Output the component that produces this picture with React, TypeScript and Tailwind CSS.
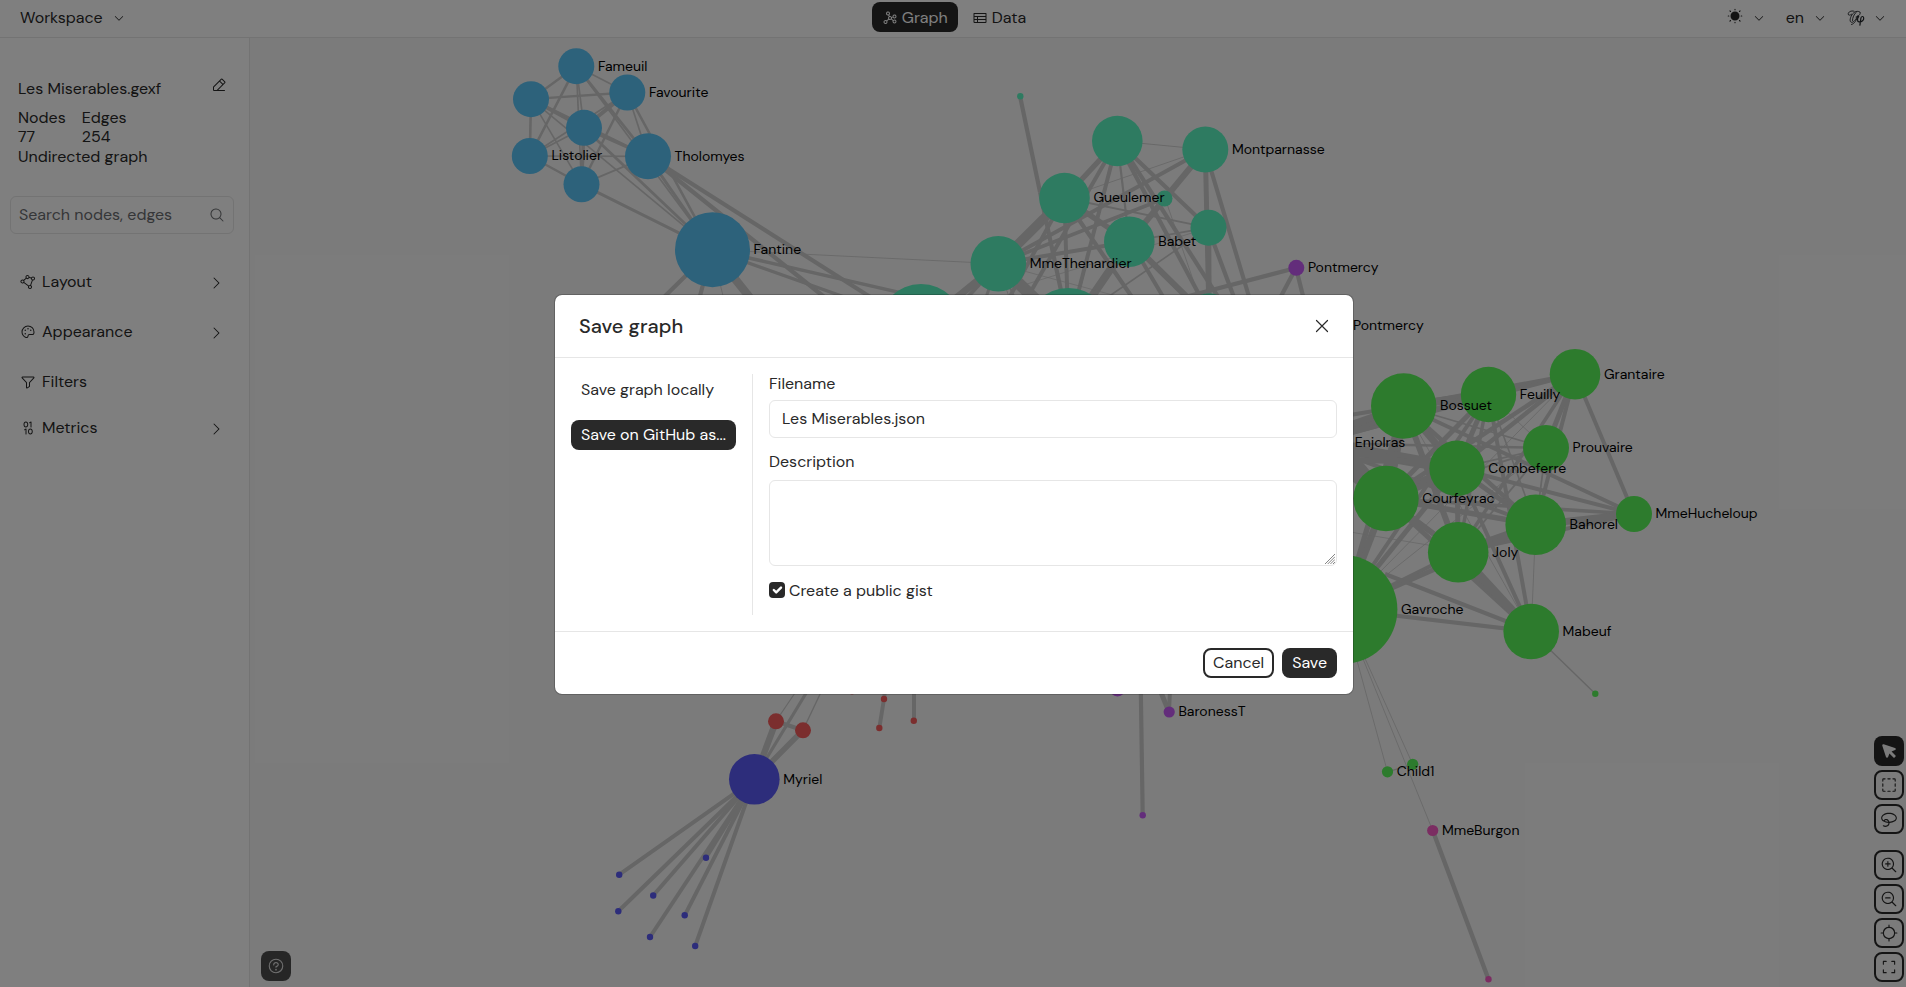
import React from "react";
import {
  PiBinary,
  PiCaretDown,
  PiCaretRight,
  PiCornersOut,
  PiCursorFill,
  PiFunnel,
  PiGps,
  PiGraph,
  PiLasso,
  PiMagnifyingGlass,
  PiMagnifyingGlassMinus,
  PiMagnifyingGlassPlus,
  PiPalette,
  PiPencilSimpleLine,
  PiPolygon,
  PiQuestion,
  PiSelection,
  PiSunDimFill,
  PiTable,
} from "react-icons/pi";

const BLUE = "#5ac4f6";
const TEAL = "#5cf6c2";
const GREEN = "#5af65a";
const PURPLE = "#c65af6";
const RED = "#f65c5c";
const INDIGO = "#5a5af6";
const PINK = "#f65ac4";

type Node = { x: number; y: number; r: number; c: string; label?: string };

const NODES: Record<string, Node> = {
  fameuil: { x: 576.3, y: 66.2, r: 18, c: BLUE, label: "Fameuil" },
  favourite: { x: 627.3, y: 92.5, r: 18, c: BLUE, label: "Favourite" },
  blach: { x: 531, y: 99.2, r: 18, c: BLUE },
  dahlia: { x: 584, y: 127.8, r: 18, c: BLUE },
  listolier: { x: 529.8, y: 156, r: 18, c: BLUE, label: "Listolier" },
  zephine: { x: 581.5, y: 184.3, r: 18, c: BLUE },
  tholomyes: { x: 648, y: 156.3, r: 23, c: BLUE, label: "Tholomyes" },
  fantine: { x: 712.5, y: 249.7, r: 37.5, c: BLUE, label: "Fantine" },

  anzelma: { x: 1020.3, y: 96.3, r: 3.2, c: TEAL },
  claquesous: { x: 1117.3, y: 141, r: 25.3, c: TEAL },
  montparnasse: { x: 1205.3, y: 149.5, r: 23, c: TEAL, label: "Montparnasse" },
  gueulemer: { x: 1064.5, y: 198, r: 25.3, c: TEAL, label: "Gueulemer" },
  boulatruelle: { x: 1164.5, y: 198.5, r: 8, c: TEAL },
  babet: { x: 1129.3, y: 241.7, r: 25.3, c: TEAL, label: "Babet" },
  brujon: { x: 1208.5, y: 227.7, r: 18, c: TEAL },
  mmeThenardier: { x: 998.3, y: 263.7, r: 27.8, c: TEAL, label: "MmeThenardier" },
  javert: { x: 921, y: 326.5, r: 42.6, c: TEAL },
  thenardier: { x: 1068.3, y: 331, r: 43, c: TEAL },
  eponine: { x: 1209, y: 316, r: 22.8, c: TEAL },

  pontmercy: { x: 1296.3, y: 267.8, r: 8, c: PURPLE, label: "Pontmercy" },
  baroness: { x: 1169.2, y: 712, r: 5.6, c: PURPLE, label: "BaronessT" },
  magnon: { x: 1117.5, y: 688.3, r: 8.2, c: PURPLE },
  vaubois: { x: 1142.7, y: 815.2, r: 3.2, c: PURPLE },

  bossuet: { x: 1403.7, y: 406, r: 32.7, c: GREEN, label: "Bossuet" },
  feuilly: { x: 1488.5, y: 394.5, r: 27.7, c: GREEN, label: "Feuilly" },
  grantaire: { x: 1575, y: 374.2, r: 25.3, c: GREEN, label: "Grantaire" },
  prouvaire: { x: 1546, y: 448, r: 23, c: GREEN, label: "Prouvaire" },
  combeferre: { x: 1457, y: 468.3, r: 27.7, c: GREEN, label: "Combeferre" },
  courfeyrac: { x: 1386, y: 498.5, r: 32.7, c: GREEN, label: "Courfeyrac" },
  joly: { x: 1458.2, y: 552.3, r: 30.3, c: GREEN, label: "Joly" },
  bahorel: { x: 1535.7, y: 524.7, r: 30.3, c: GREEN, label: "Bahorel" },
  mmeHucheloup: { x: 1634, y: 514, r: 18, c: GREEN, label: "MmeHucheloup" },
  mabeuf: { x: 1531.2, y: 631.5, r: 27.8, c: GREEN, label: "Mabeuf" },
  mother: { x: 1595.3, y: 693.8, r: 3.2, c: GREEN },
  gavroche: { x: 1343, y: 609.5, r: 54.4, c: GREEN, label: "Gavroche" },
  enjolras: { x: 1314.2, y: 443, r: 37, c: GREEN, label: "Enjolras" },
  child1: { x: 1387.5, y: 771.8, r: 5.6, c: GREEN, label: "Child1" },
  child2: { x: 1412.7, y: 764.3, r: 5.6, c: GREEN },

  burgon: { x: 1432.7, y: 830.5, r: 5.6, c: PINK, label: "MmeBurgon" },
  jondrette: { x: 1488.5, y: 979.3, r: 3.2, c: PINK },

  baptistine: { x: 776, y: 721.3, r: 8, c: RED },
  magloire: { x: 803, y: 730.3, r: 8, c: RED },
  labarre: { x: 884, y: 699, r: 3.2, c: RED },
  isabeau: { x: 879.3, y: 728, r: 3.2, c: RED },
  gervais: { x: 913.8, y: 720.7, r: 3.2, c: RED },
  scaufflaire: { x: 852, y: 691.3, r: 3.2, c: RED },

  myriel: { x: 754.3, y: 779.3, r: 25.3, c: INDIGO, label: "Myriel" },
  napoleon: { x: 619.2, y: 874.7, r: 3.2, c: INDIGO },
  cravatte: { x: 618.3, y: 911.3, r: 3.2, c: INDIGO },
  count: { x: 653.2, y: 895.5, r: 3.2, c: INDIGO },
  oldMan: { x: 650, y: 937, r: 3.2, c: INDIGO },
  geborand: { x: 706, y: 857.8, r: 3.2, c: INDIGO },
  champtercier: { x: 684.7, y: 915.3, r: 3.2, c: INDIGO },
  countess: { x: 695.2, y: 946, r: 3.2, c: INDIGO },
};

const LINKS: [string, string, number][] = [
  ["fameuil", "blach", 2.4],
  ["fameuil", "favourite", 1.7],
  ["fameuil", "dahlia", 1.7],
  ["fameuil", "zephine", 1.7],
  ["fameuil", "listolier", 2.6],
  ["fameuil", "tholomyes", 2.8],
  ["fameuil", "fantine", 1.7],
  ["blach", "favourite", 2.3],
  ["blach", "dahlia", 3.6],
  ["blach", "listolier", 2.6],
  ["blach", "zephine", 1.6],
  ["blach", "tholomyes", 2.6],
  ["blach", "fantine", 1.6],
  ["favourite", "dahlia", 4],
  ["favourite", "listolier", 1.7],
  ["favourite", "zephine", 2.5],
  ["favourite", "tholomyes", 1.7],
  ["favourite", "fantine", 2.6],
  ["dahlia", "listolier", 1.7],
  ["dahlia", "zephine", 3.5],
  ["dahlia", "tholomyes", 3.4],
  ["dahlia", "fantine", 2.8],
  ["listolier", "zephine", 2.4],
  ["listolier", "tholomyes", 1.7],
  ["zephine", "tholomyes", 1.8],
  ["zephine", "fantine", 3],
  ["tholomyes", "fantine", 3],
  ["fantine", "mmeThenardier", 0.8],
  ["fantine", "thenardier", 3.6],

  ["claquesous", "montparnasse", 0.9],
  ["claquesous", "gueulemer", 5.4],
  ["claquesous", "thenardier", 4],
  ["claquesous", "brujon", 4.2],
  ["claquesous", "babet", 2.2],
  ["montparnasse", "gueulemer", 0.8],
  ["montparnasse", "babet", 6],
  ["montparnasse", "mmeThenardier", 4],
  ["montparnasse", "eponine", 5],
  ["gueulemer", "mmeThenardier", 9.5],
  ["gueulemer", "babet", 5.5],
  ["gueulemer", "brujon", 1.8],
  ["gueulemer", "thenardier", 4],
  ["boulatruelle", "mmeThenardier", 3.6],
  ["babet", "brujon", 1.8],
  ["babet", "mmeThenardier", 4],
  ["babet", "thenardier", 8],
  ["brujon", "eponine", 5.4],
  ["mmeThenardier", "javert", 7],
  ["mmeThenardier", "thenardier", 12],

  ["bossuet", "feuilly", 8],
  ["bossuet", "grantaire", 4],
  ["bossuet", "prouvaire", 1.8],
  ["bossuet", "combeferre", 7],
  ["bossuet", "courfeyrac", 11],
  ["bossuet", "joly", 6],
  ["bossuet", "bahorel", 4.5],
  ["bossuet", "mmeHucheloup", 4],
  ["bossuet", "mabeuf", 0.8],
  ["bossuet", "enjolras", 8],
  ["feuilly", "grantaire", 4],
  ["feuilly", "prouvaire", 0.8],
  ["feuilly", "combeferre", 5],
  ["feuilly", "courfeyrac", 5],
  ["feuilly", "joly", 3.5],
  ["feuilly", "bahorel", 1.6],
  ["feuilly", "mabeuf", 4],
  ["feuilly", "enjolras", 5],
  ["grantaire", "prouvaire", 5],
  ["grantaire", "combeferre", 4.5],
  ["grantaire", "courfeyrac", 4.5],
  ["grantaire", "joly", 3.6],
  ["grantaire", "bahorel", 4],
  ["grantaire", "mmeHucheloup", 4],
  ["grantaire", "enjolras", 3.6],
  ["grantaire", "gavroche", 0.8],
  ["prouvaire", "combeferre", 1.8],
  ["prouvaire", "courfeyrac", 2],
  ["prouvaire", "joly", 1.8],
  ["prouvaire", "bahorel", 1.8],
  ["prouvaire", "enjolras", 2.6],
  ["prouvaire", "gavroche", 0.8],
  ["combeferre", "courfeyrac", 11],
  ["combeferre", "joly", 5],
  ["combeferre", "bahorel", 5],
  ["combeferre", "mmeHucheloup", 4],
  ["combeferre", "mabeuf", 4],
  ["combeferre", "gavroche", 5],
  ["combeferre", "enjolras", 12],
  ["courfeyrac", "joly", 5.5],
  ["courfeyrac", "bahorel", 5.5],
  ["courfeyrac", "mmeHucheloup", 3.6],
  ["courfeyrac", "mabeuf", 5],
  ["courfeyrac", "gavroche", 7],
  ["courfeyrac", "enjolras", 14],
  ["joly", "bahorel", 8],
  ["joly", "mmeHucheloup", 4],
  ["joly", "mabeuf", 9],
  ["joly", "gavroche", 4],
  ["joly", "enjolras", 5],
  ["bahorel", "mmeHucheloup", 7],
  ["bahorel", "mabeuf", 0.8],
  ["bahorel", "gavroche", 5],
  ["bahorel", "enjolras", 4],
  ["mabeuf", "mother", 1.4],
  ["mabeuf", "gavroche", 4.2],
  ["bossuet", "gavroche", 5.5],
  ["feuilly", "gavroche", 4],
  ["gavroche", "child1", 0.8],
  ["gavroche", "child2", 0.8],
  ["gavroche", "burgon", 0.8],
  ["child1", "child2", 1.4],
  ["burgon", "jondrette", 4.4],

  ["baptistine", "magloire", 4.2],
  ["baptistine", "myriel", 6.4],
  ["magloire", "myriel", 5.6],
  ["labarre", "isabeau", 4],
  ["napoleon", "myriel", 4],
  ["cravatte", "myriel", 4],
  ["count", "myriel", 4],
  ["oldMan", "myriel", 4],
  ["geborand", "myriel", 4],
  ["champtercier", "myriel", 4],
  ["countess", "myriel", 4],
];

// Links whose far end lies underneath the dialog.
const SEGMENTS: [number, number, number, number, number][] = [
  [648, 156, 875, 300, 4.2],
  [648, 156, 828, 300, 4.2],
  [712, 250, 850, 299, 3.4],
  [712, 250, 661, 300, 4.2],
  [712, 250, 699, 300, 4.2],
  [712, 250, 724, 300, 0.8],
  [712, 250, 755, 304, 8.4],

  [1020, 96, 1040, 192, 4.2],
  [1040, 192, 1063, 300, 4.2],
  [1117, 141, 1202, 300, 4.2],
  [1123, 148, 1220, 300, 4.2],
  [1117, 141, 1026, 300, 4],
  [1117, 141, 1077, 300, 1.8],
  [1165, 198, 1200, 300, 0.8],
  [1205, 150, 1250, 300, 4.2],
  [1208, 228, 1235, 300, 4.2],
  [1208, 228, 1108, 297, 1.6],
  [1208, 228, 1027, 284, 0.7],
  [1130, 241, 1190, 300, 6],
  [1130, 241, 1165, 300, 4],
  [1064, 198, 1134, 300, 4.2],
  [1064, 198, 1008, 300, 4],
  [998, 264, 1120, 297, 0.7],
  [998, 264, 985, 300, 3],
  [998, 264, 1010, 300, 0.8],
  [998, 264, 1016, 300, 1.8],
  [998, 264, 965, 300, 4],
  [1296, 268, 1185, 297, 4.2],
  [1296, 268, 1279, 300, 4.2],
  [1296, 268, 1304, 300, 4.2],

  [1350, 415, 1404, 406, 4],
  [1350, 425, 1404, 406, 7],
  [1350, 433, 1404, 410, 4],
  [1350, 460, 1457, 462, 6],
  [1350, 455, 1386, 498, 10],
  [1350, 532, 1458, 550, 0.7],
  [1385, 574, 1531, 631, 4.2],

  [754, 779, 808, 690, 3.2],
  [776, 721, 797, 690, 1.2],
  [803, 730, 822, 690, 1.4],
  [884, 699, 885, 690, 4],
  [914, 721, 914, 690, 4],
  [1142.7, 815, 1140.8, 690, 4.2],
  [1169, 712, 1160, 690, 5],
  [1169, 712, 1170, 690, 4],
];

function GraphCanvas() {
  return (
    <svg className="block h-full w-full" viewBox="250 38 1656 949" fontFamily="'DM Sans', sans-serif" fontSize={14}>
      <g stroke="#ccc">
        {LINKS.map(([a, b, w]) => (
          <line key={a + b} x1={NODES[a].x} y1={NODES[a].y} x2={NODES[b].x} y2={NODES[b].y} strokeWidth={w} />
        ))}
        {SEGMENTS.map(([x1, y1, x2, y2, w], i) => (
          <line key={i} x1={x1} y1={y1} x2={x2} y2={y2} strokeWidth={w} />
        ))}
      </g>
      {Object.entries(NODES).map(([id, n]) => (
        <circle key={id} cx={n.x} cy={n.y} r={n.r} fill={n.c} />
      ))}
      {Object.entries(NODES).map(([id, n]) =>
        n.label ? (
          <text key={id} x={n.x + n.r + 3.6} y={n.y + 4.4} fill="#000">
            {n.label}
          </text>
        ) : null,
      )}
      <text x={1353} y={330}>Pontmercy</text>
    </svg>
  );
}

function GephiMark() {
  return (
    <svg className="h-4 w-4.5" viewBox="0 0 18 16" fill="none" stroke="#212529" strokeWidth="0.9" strokeLinecap="round">
      <path d="M7 1.200C4 .3 1.200 2 1.200 4c0 1.500 1.800 1.500 3.300.3M13 2.200C11 .2 7 1.500 4.800 5 2.800 8.500 2.500 12 4.500 12.300c2.200.3 5-3.300 6-6.300M13 2.200c1.200 1.200-1 4.300-4 4.800M10.800 6C9.500 10 7.500 14 4.500 14.500" />
      <path d="M11.700 6.500c-1.500 1.500-1.800 5.300.3 5.300 3 .3 5-1.800 4.700-3.800-.3-2.200-2.500-1.800-2.800.2l-1 7" strokeWidth="1.200" />
      <path d="M9 2.500c-2 2-3.500 5-3.500 8" />
    </svg>
  );
}

function Header() {
  return (
    <header className="grid h-[38px] shrink-0 grid-cols-3 items-start border-b border-[#e6e6e6] bg-white pt-0.5">
      <div className="flex h-[30px] items-center pt-0.5 pl-5">
        <span>Workspace</span>
        <PiCaretDown className="ml-[10px] size-3" />
      </div>
      <div className="flex justify-center pl-0.5">
        <div className="flex h-[30px] items-center rounded-lg bg-[#292929] px-[10px] pt-0.5 text-white">
          <PiGraph className="mr-1 size-4" />
          <span>Graph</span>
        </div>
        <div className="ml-1 flex h-[30px] items-center px-[10px] pt-0.5">
          <PiTable className="mr-1 size-4" />
          <span>Data</span>
        </div>
      </div>
      <div className="flex h-[30px] items-center justify-end pt-0.5 pr-5">
        <PiSunDimFill className="mr-[9px] -mt-1 size-[18px]" />
        <PiCaretDown className="mr-[21px] size-3" />
        <span>en</span>
        <PiCaretDown className="mr-[21px] ml-[10px] size-3" />
        <GephiMark />
        <PiCaretDown className="ml-[9px] size-3" />
      </div>
    </header>
  );
}

const MENU = [
  { label: "Layout", Icon: PiPolygon, arrow: true, box: "h-[50px]" },
  { label: "Appearance", Icon: PiPalette, arrow: true, box: "h-[50px]" },
  { label: "Filters", Icon: PiFunnel, arrow: false, box: "h-[50px]" },
  { label: "Metrics", Icon: PiBinary, arrow: true, box: "h-[42px]" },
];

function Sidebar() {
  return (
    <aside className="flex w-[250px] shrink-0 flex-col border-r border-[#e6e6e6] bg-white">
      <div className="flex items-start justify-between pt-[41px] pr-[22px] pl-[18px] leading-[19.200px]">
        <span>Les Miserables.gexf</span>
        <PiPencilSimpleLine className="-mt-[2px] size-4" />
      </div>
      <div className="mt-[10px] flex gap-4 pl-[18px] leading-[19.200px]">
        <div>
          <div>Nodes</div>
          <div>77</div>
        </div>
        <div>
          <div>Edges</div>
          <div>254</div>
        </div>
      </div>
      <div className="pl-[18px] leading-[19.200px]">Undirected graph</div>
      <div className="mt-[30px] mr-[15px] ml-[10px] flex h-[38px] items-center justify-between rounded-md border border-[#e6e6e6] pr-2 pl-2 text-[#6b6d70]">
        <span>Search nodes, edges</span>
        <PiMagnifyingGlass className="size-4" />
      </div>
      <nav className="mt-[23px] flex flex-col">
        {MENU.map(({ label, Icon, arrow, box }) => (
          <div key={label} className={`flex items-center pr-[25px] pl-5 ${box}`}>
            <Icon className="mr-[6px] size-4" />
            <span className="flex-1">{label}</span>
            {arrow && <PiCaretRight className="mt-0.5 size-4" />}
          </div>
        ))}
      </nav>
    </aside>
  );
}

function ToolButton({ Icon, active = false }: { Icon: React.ComponentType<{ className?: string }>; active?: boolean }) {
  return (
    <div
      className={
        active
          ? "flex size-[30px] items-center justify-center rounded-lg bg-[#292929] text-[#f7f7f7]"
          : "flex size-[30px] items-center justify-center rounded-lg border-2 border-[#292929]"
      }
    >
      <Icon className="size-[18px]" />
    </div>
  );
}

function SaveDialog() {
  return (
    <div className="flex h-[401px] w-[800px] flex-col rounded-lg border border-black/20 bg-white bg-clip-padding text-[#292929]">
      <div className="flex h-[63px] items-center justify-between border-b border-[#e6e6e6] pr-[23px] pl-6">
        <h5 className="text-xl font-medium">Save graph</h5>
        <svg className="size-4" viewBox="0 0 16 16" stroke="#292929" strokeWidth="1.200" strokeLinecap="round">
          <path d="M2.500 2.500l11 11M13.500 2.500l-11 11" />
        </svg>
      </div>
      <div className="flex flex-1 p-4">
        <div className="flex w-[182px] flex-col items-start border-r border-[#e6e6e6] pt-px">
          <div className="flex h-[30px] items-center px-[10px]">Save graph locally</div>
          <div className="mt-[15px] flex h-[30px] items-center rounded-lg bg-[#292929] px-[10px] text-white">
            Save on GitHub as...
          </div>
        </div>
        <div className="flex flex-1 flex-col pl-4">
          <label className="h-[26px] leading-[19px]">Filename</label>
          <div className="flex h-[38px] items-center rounded-md border border-[#e6e6e6] px-3">Les Miserables.json</div>
          <label className="mt-[15px] h-[27px] leading-[18px]">Description</label>
          <div className="relative h-[86px]">
            <textarea className="block h-full w-full resize-none rounded-md border border-[#e6e6e6]" />
            <svg className="absolute right-[2px] bottom-[2px] size-[10px]" viewBox="0 0 10 10" stroke="#777" strokeWidth="0.9">
              <path d="M0 10L10 0M2.700 10L10 2.700M5.400 10L10 5.400M8 10L10 8" />
            </svg>
          </div>
          <div className="mt-4 flex h-[19px] items-start">
            <span className="flex size-4 items-center justify-center rounded bg-[#292929]">
              <svg className="size-4" viewBox="0 0 20 20" fill="none">
                <path d="M6 10l3 3 6-6" stroke="#fff" strokeWidth="3" strokeLinecap="round" strokeLinejoin="round" />
              </svg>
            </span>
            <span className="ml-1 leading-[18px]">Create a public gist</span>
          </div>
        </div>
      </div>
      <div className="flex h-[63px] items-center justify-end gap-2 border-t border-[#e6e6e6] pr-4">
        <button className="h-[30px] rounded-lg border-2 border-[#292929] px-2">Cancel</button>
        <button className="h-[30px] rounded-lg bg-[#292929] px-[10px] text-white">Save</button>
      </div>
    </div>
  );
}

export default function App() {
  return (
    <div className="relative flex h-[987px] w-[1906px] flex-col overflow-hidden bg-white font-['DM_Sans',sans-serif] text-base leading-6 text-[#292929]">
      <Header />
      <div className="flex min-h-0 flex-1">
        <Sidebar />
        <main className="relative min-w-0 flex-1 bg-[#f7f7f7]">
          <GraphCanvas />
          <div className="absolute bottom-[6px] left-[11px] flex size-[30px] items-center justify-center rounded-lg bg-[#4d4d4d] text-[#dedede]">
            <PiQuestion className="size-[18px]" />
          </div>
          <div className="absolute right-[2px] bottom-[5px] flex flex-col gap-1">
            <ToolButton Icon={PiCursorFill} active />
            <ToolButton Icon={PiSelection} />
            <ToolButton Icon={PiLasso} />
            <div className="h-2" />
            <ToolButton Icon={PiMagnifyingGlassPlus} />
            <ToolButton Icon={PiMagnifyingGlassMinus} />
            <ToolButton Icon={PiGps} />
            <ToolButton Icon={PiCornersOut} />
          </div>
        </main>
      </div>
      <div className="absolute inset-0 flex items-start justify-center bg-black/50 pt-[294px] pl-[2px]">
        <SaveDialog />
      </div>
    </div>
  );
}
